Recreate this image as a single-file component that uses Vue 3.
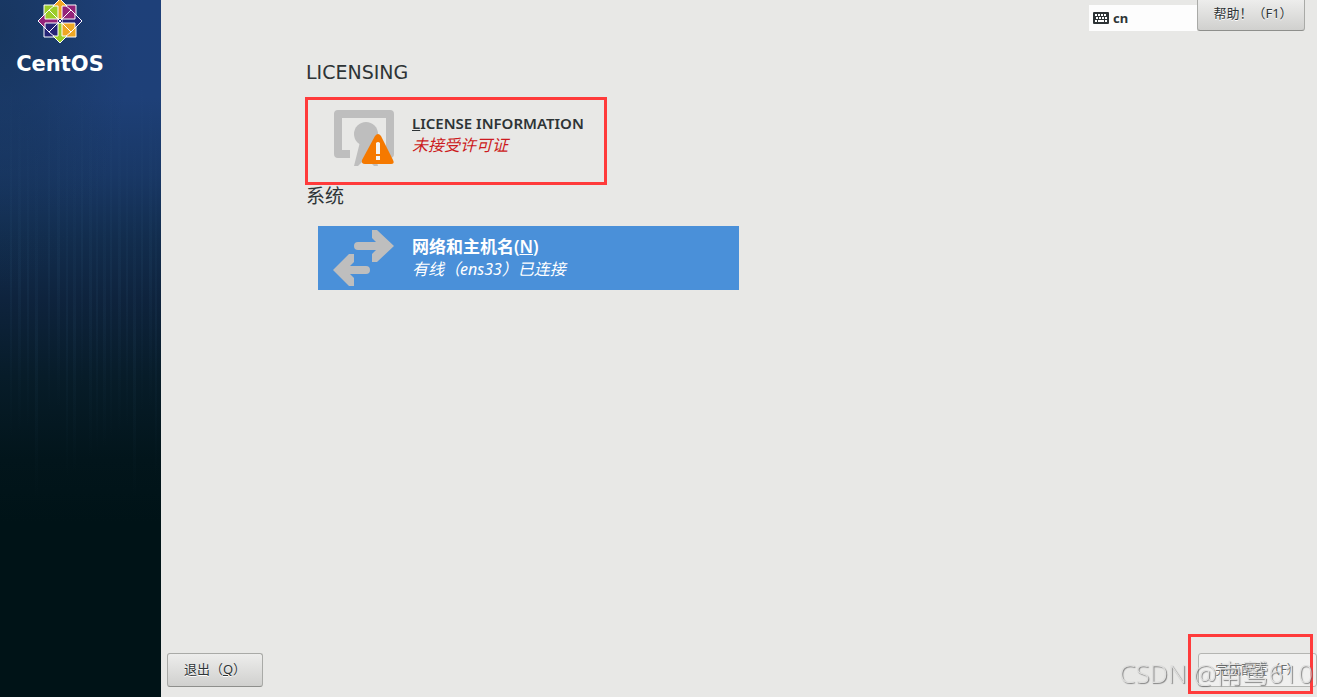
<script setup>
const stripes = [10, 18, 27, 35, 48, 57, 66, 73, 81, 89, 96, 103, 110, 118, 126, 133, 141, 149, 155]
</script>

<template>
  <div class="installer">
    <aside class="sidebar">
      <svg class="texture" viewBox="0 0 161 697" preserveAspectRatio="none" aria-hidden="true">
        <defs>
          <linearGradient id="streak" x1="0" y1="0" x2="0" y2="1">
            <stop offset="0" stop-color="#4b83a8" stop-opacity="0" />
            <stop offset="0.55" stop-color="#4b83a8" stop-opacity="0.07" />
            <stop offset="1" stop-color="#4b83a8" stop-opacity="0" />
          </linearGradient>
        </defs>
        <rect v-for="(x, i) in stripes" :key="x" :x="x" :y="80 + (i % 4) * 20" :width="2 + (i % 2)" :height="360 - (i % 3) * 25" fill="url(#streak)" />
      </svg>
      <div class="brand">
        <svg class="emblem" width="46" height="44" viewBox="0 0 46 44" aria-hidden="true">
          <g stroke="#fff" stroke-width="1">
            <path d="M7 5H22V20H7z" fill="#9ccd2a" />
            <path d="M24 5H39V20H24z" fill="#932279" />
            <path d="M7 22H22V37H7z" fill="#262577" />
            <path d="M24 22H39V37H24z" fill="#efa724" />
            <path d="M12 10L22 20M34 10L24 20M12 32L22 22M34 32L24 22M12 10L7 15M12 10L18 5M34 10L39 15M34 10L28 5M12 32L7 27M12 32L18 37M34 32L39 27M34 32L28 37" fill="none" />
          </g>
          <g stroke="#fff" stroke-width="1">
            <path d="M23 -1L30 6H25V19H21V6H16z" fill="#efa724" />
            <path d="M45 21L38 28V23H25V19H38V14z" fill="#262577" />
            <path d="M23 43L16 36H21V23H25V36H30z" fill="#9ccd2a" />
            <path d="M1 21L8 14V19H21V23H8V28z" fill="#932279" />
          </g>
          <path d="M21 19h4v4h-4z" fill="#262577" />
          <path d="M21 19l4 4m0-4l-4 4" stroke="#fff" />
        </svg>
        <span class="wordmark">CentOS</span>
      </div>
    </aside>

    <main class="main">
      <header class="topbar">
        <button class="layout" type="button">
          <svg width="16" height="12" viewBox="0 0 16 12" aria-hidden="true">
            <rect width="16" height="12" rx="1" fill="#2e3436" />
            <path d="M2 3h12M3 6h11" stroke="#fff" stroke-width="2" stroke-dasharray="2 1" />
            <path d="M2 9h2m1 0h6m1 0h2" stroke="#fff" stroke-width="2" />
          </svg>
          <span>cn</span>
        </button>
        <button class="btn help" type="button">帮助！（F1）</button>
      </header>

      <div class="content">
        <section>
          <h2>LICENSING</h2>
          <button class="spoke license" type="button">
            <svg class="icon" width="64" height="64" viewBox="0 0 64 64" aria-hidden="true">
              <path d="M6 4H58Q62 4 62 8V48Q62 52 58 52H54V12H10V44H18V52H6Q2 52 2 48V8Q2 4 6 4z" fill="#bebebe" />
              <circle cx="34" cy="28" r="12" fill="#bebebe" />
              <path d="M28 36L22 60H26L34 52 42 60H46L40 36z" fill="#bebebe" />
              <path d="M43 30Q46 26 49 30L61 54Q63 58 59 58H33Q29 58 30 54z" fill="#f57900" />
              <path d="M44 37Q46 35 48 37V48H44zM44 50H48V54H44z" fill="#f5f5f3" />
            </svg>
            <span class="labels">
              <strong><u>L</u>ICENSE INFORMATION</strong>
              <em>未接受许可证</em>
            </span>
            <span class="mark"></span>
          </button>
        </section>
        <section>
          <h2>系统</h2>
          <button class="spoke selected" type="button">
            <svg class="icon" width="64" height="64" viewBox="0 0 64 64" aria-hidden="true">
              <path d="M26 16H44L40 12V4H45L62 20 45 36H40V28L44 24H26Q22 24 22 20T26 16z" fill="#bebebe" />
              <path d="M34 40H18L22 36V28H17L1 44 17 60H22V52L18 48H34Q38 48 38 44T34 40z" fill="#bebebe" />
            </svg>
            <span class="labels">
              <strong>网络和主机名(<u>N</u>)</strong>
              <em>有线（ens33）已连接</em>
            </span>
          </button>
        </section>
      </div>

      <footer class="actions">
        <button class="btn quit" type="button">退出（<u>Q</u>）</button>
        <div class="finish-wrap">
          <button class="btn finish" type="button" disabled>完成配置（F）</button>
          <span class="mark"></span>
          <span class="credit">CSDN @南鹫610</span>
        </div>
      </footer>
    </main>
  </div>
</template>

<style>
body {
  margin: 0;
  background: #e8e8e6;
}
</style>

<style scoped>
.installer {
  display: flex;
  min-height: 100vh;
  overflow: hidden;
  background: #e8e8e6;
  color: #2e3436;
  font-family: "Noto Sans", "Noto Sans CJK SC", sans-serif;
}
.sidebar {
  position: relative;
  flex: 0 0 161px;
  background:
    radial-gradient(130px 260px at 0 30px, rgba(20, 48, 80, 0.6), transparent),
    linear-gradient(180deg, #1e4079 0%, #1e4078 14%, #193866 25%, #122d4e 34%, #0e233d 43%, #071c29 54%, #02151b 66%, #001317 75%, #001317 100%);
}
.texture {
  position: absolute;
  width: 100%;
  height: 100%;
}
.brand {
  position: relative;
  display: flex;
  flex-direction: column;
  align-items: center;
  width: 120px;
}
.emblem {
  display: block;
}
.wordmark {
  margin-top: 8px;
  color: #fff;
  font: bold 21px/24px "DejaVu Sans", sans-serif;
}
.main {
  flex: 1;
  display: flex;
  flex-direction: column;
  min-width: 0;
}
button {
  font-family: inherit;
  color: inherit;
}
.topbar {
  display: flex;
  justify-content: flex-end;
  align-items: flex-start;
  padding-right: 12px;
}
.layout {
  display: flex;
  align-items: center;
  gap: 4px;
  width: 108px;
  height: 26px;
  margin-top: 5px;
  padding: 0 4px;
  border: 0;
  background: #fdfdfd;
  font-size: 13px;
  font-weight: bold;
}
.btn {
  height: 34px;
  padding: 0 15px 2px;
  border: 1px solid #a9aaa7;
  border-bottom-color: #8e8f8c;
  border-radius: 3px;
  background: linear-gradient(#ededec, #d0d0ce);
  font-size: 13px;
  line-height: 20px;
  white-space: nowrap;
  text-shadow: 0 1px #fff;
  text-spacing-trim: space-all;
}
.help {
  width: 108px;
  height: 31px;
  padding: 0 8px 5px 12px;
  border-top: 0;
  border-radius: 0 0 3px 3px;
}
.content {
  flex: 1;
  padding: 28px 24px 0 145px;
}
h2 {
  margin: 0;
  font: 19px/26px "DejaVu Sans", "Noto Sans CJK SC", sans-serif;
}
.spoke {
  position: relative;
  display: flex;
  width: 421px;
  max-width: 100%;
  height: 64px;
  margin: 17px 0 0 12px;
  padding: 0 14px;
  border: 0;
  background: transparent;
  text-align: left;
}
.license {
  margin: 21px 0 13px 12px;
}
.icon {
  flex: none;
}
.labels {
  display: flex;
  flex-direction: column;
  align-self: flex-start;
  padding: 10px 0 0 16px;
  font-size: 16px;
  line-height: 22px;
  white-space: nowrap;
}
.license .labels {
  padding-top: 6px;
}
.labels strong {
  font-size: 17px;
  font-weight: 600;
}
.license strong {
  font-size: 15px;
}
.license em {
  color: #cc1a20;
}
.selected {
  background: #4a90d9;
  color: #fff;
}
.mark {
  position: absolute;
  box-sizing: border-box;
  border: 3px solid #ff3b3b;
  pointer-events: none;
}
.license .mark {
  top: -9px;
  left: -13px;
  width: 302px;
  height: 88px;
}
.actions {
  display: flex;
  justify-content: space-between;
  padding: 0 0 10px 6px;
}
.quit {
  width: 96px;
}
.finish-wrap {
  position: relative;
}
.finish {
  width: 119px;
  border-color: #b4b5b2;
  background: #f0f0ef;
  color: #6b6f6f;
}
.finish-wrap .mark {
  top: -19px;
  left: -10px;
  width: 125px;
  height: 60px;
}
.credit {
  position: absolute;
  top: 3px;
  right: 4px;
  color: #dededd;
  font: 300 26px/34px "Open Sans", "Noto Sans CJK SC", sans-serif;
  white-space: nowrap;
  text-shadow: 1px 1px 1px #666;
  opacity: 0.8;
  pointer-events: none;
}
</style>
